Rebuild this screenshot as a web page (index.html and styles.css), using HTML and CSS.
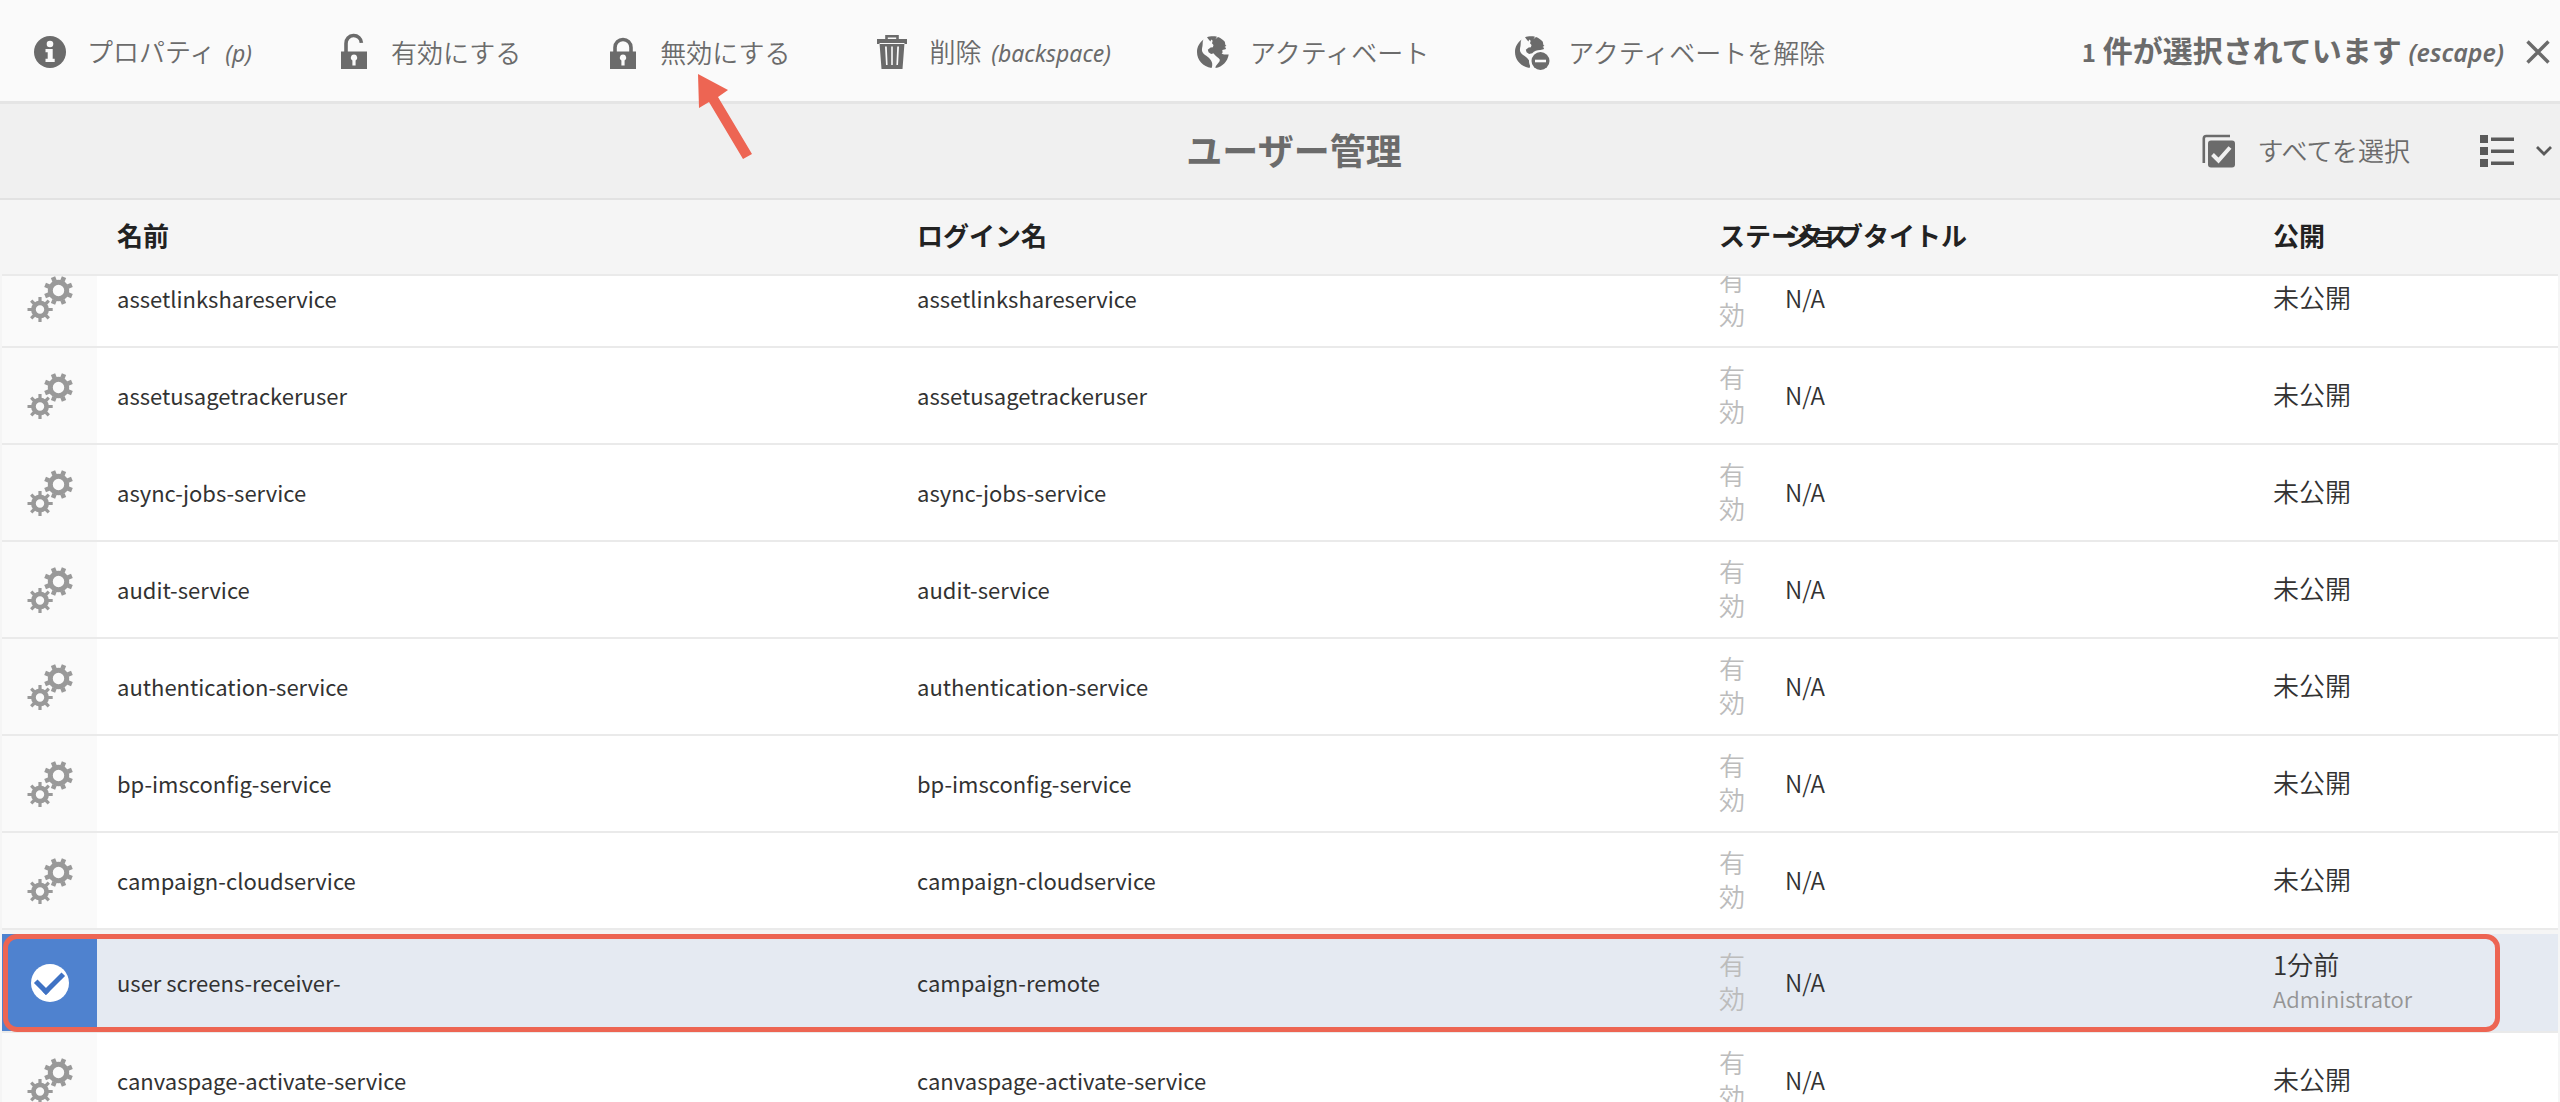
FILE: index.html
```html
<!DOCTYPE html>
<html lang="ja">
<head>
<meta charset="utf-8">
<title>ユーザー管理</title>
<link rel="stylesheet" href="styles.css">
</head>
<body>
<svg class="sprite" aria-hidden="true">
  <symbol id="gears" viewBox="0 0 46 46">
    <g fill="none" stroke="currentColor">
      <circle cx="31.5" cy="14.5" r="8.2" stroke-width="5"/>
      <path stroke-width="4.6" d="M40.8 18.4l4.1 1.7M35.4 23.8l1.6 4M27.6 23.8l-1.6 4M22.2 18.4l-4.1 1.7M22.2 10.6l-4.1-1.7M27.6 5.2l-1.6-4M35.4 5.2l1.6-4M40.8 10.6l4.1-1.7"/>
      <circle cx="13" cy="33.5" r="6.6" stroke-width="4.8"/>
      <path stroke-width="3.2" d="M21 33.500h4.700M5 33.500H.5M13 25.500V21M13 41.500V46M18.500 28l3.300-3.300M7.500 28l-3.300-3.300M18.500 39l3.300 3.300M7.500 39l-3.300 3.300"/>
    </g>
  </symbol>
  <symbol id="globe" viewBox="0 0 32 32">
    <path fill="currentColor" d="M6.500 3.600C2.600 6.500 0 11 0 16c0 8 6 14.800 14.500 15.900.9-1.600 1-4 .3-6-.9-2.200-2.200-3.600-3.900-5C8.800 19.200 6.400 18.300 5.400 16c-.9-2.200-.3-4.100.1-6.100.4-2-.2-4.200 1-6.300z"/>
    <path fill="currentColor" d="M10 1.300C12.500.1 17 0 20 .7l-1.600 2.600 2.600-2.200c2.500.9 5 2.600 6.800 4.700l.6 3.200 1 .7-1.800 1.300 1.500.9-.6 1.400-3.200.6.300 2.600-2 2.100-1.700-.6-2 .3.300-1.600-3.300.5-2.800.7-2.500-1.600-.8-2.500 2.800-2.300 2.300-.2.600-2.200-1.500-1.800.7-2.500-1.500-1.300-.8 1.900-1.700-1.800z"/>
    <path fill="currentColor" d="M16 15.500c3-.5 6.600.1 9.100 2.200 1.800 1 4.600 1 6.600.8C30.600 25.500 25.500 30.900 18.500 32c-.2-1.900 1.100-3 2.200-4.300 1.400-1.700 2.600-3 1.900-4.500-1.200-1.700-6.200-4.200-6.600-7.700z"/>
  </symbol>
</svg>

<header class="toolbar">
  <div class="actions">
    <button class="action" type="button">
      <svg class="icon" viewBox="0 0 32 32"><circle cx="16" cy="16" r="16" fill="currentColor"/><circle cx="16" cy="8" r="3.300" fill="#fafafa"/><path fill="#fafafa" d="M11.500 13h7.200v9.700h2v3.300h-9.200v-3.300h2.200v-6.400h-2.200z"/></svg>
      <span>プロパティ <em>(p)</em></span>
    </button>
    <button class="action" type="button">
      <svg class="icon icon-lock" viewBox="0 0 32 36"><path fill="none" stroke="currentColor" stroke-width="3.600" d="M8 20V9.500a7.700 7.700 0 0 1 15.400-.7"/><path fill="currentColor" fill-rule="evenodd" d="M3 17.500h26V35H3zM16 20.500a3.200 3.200 0 0 0-1.600 6v5h3.200v-5a3.200 3.200 0 0 0-1.600-6z"/></svg>
      <span>有効にする</span>
    </button>
    <button class="action" type="button">
      <svg class="icon icon-lock" viewBox="0 0 32 36"><path fill="none" stroke="currentColor" stroke-width="3.600" d="M8 20v-6.500a8 8 0 0 1 16 0V20"/><path fill="currentColor" fill-rule="evenodd" d="M3 17.500h26V35H3zM16 20.500a3.200 3.200 0 0 0-1.600 6v5h3.200v-5a3.200 3.200 0 0 0-1.600-6z"/></svg>
      <span>無効にする</span>
    </button>
    <button class="action" type="button">
      <svg class="icon icon-lock" viewBox="0 0 32 36"><path fill="none" stroke="currentColor" stroke-width="2.600" d="M10.500 6V2.300h11V6"/><path fill="currentColor" fill-rule="evenodd" d="M1 5h30v5H1zM3.500 9h25l-2 26h-21zM9 12.500l1 18.500h1.600l-.8-18.500zM15.200 12.500V31h1.600V12.500zM21.200 12.500L20.400 31h1.600l1-18.500z"/></svg>
      <span>削除 <em>(backspace)</em></span>
    </button>
    <button class="action" type="button">
      <svg class="icon" viewBox="0 0 32 32"><use href="#globe"/></svg>
      <span>アクティベート</span>
    </button>
    <button class="action" type="button">
      <svg class="icon" viewBox="0 0 32 32"><use href="#globe"/><circle cx="25" cy="25" r="11" fill="#fafafa"/><circle cx="25.500" cy="25" r="9" fill="currentColor"/><path stroke="#fafafa" stroke-width="2.600" d="M20 25h11"/></svg>
      <span>アクティベートを解除</span>
    </button>
  </div>
  <button class="selection" type="button">
    <span><span class="count">1</span> 件が選択されています <em>(escape)</em></span>
    <svg class="close" viewBox="0 0 24 24"><path fill="none" stroke="currentColor" stroke-width="3.400" d="M1.500 1.500l21 21M22.500 1.500l-21 21"/></svg>
  </button>
</header>

<div class="titlebar">
  <h1>ユーザー管理</h1>
  <div class="view">
    <button class="action" type="button">
      <svg class="icon-select" viewBox="0 0 34 34"><path fill="none" stroke="currentColor" stroke-width="2.600" d="M2.800 29V4.500a2.500 2.500 0 0 1 2.500-2.500H29"/><rect x="7" y="6.500" width="27" height="27" rx="3" fill="currentColor"/><path fill="none" stroke="#f0f0f0" stroke-width="4" d="M11.500 20.500l6 6L29 13.500"/></svg>
      <span>すべてを選択</span>
    </button>
    <button class="switcher" type="button" aria-label="リスト表示">
      <svg class="icon-list" viewBox="0 0 34 34"><path fill="currentColor" d="M0 1h8v8H0zM0 13h8v8H0zM0 25h8v8H0zM11 3.500h23v3.400H11zM11 15.500h23v3.400H11zM11 27.500h23v3.400H11z"/></svg>
      <svg class="chevron" viewBox="0 0 16 10"><path fill="none" stroke="currentColor" stroke-width="2.800" d="M1 1l7 7 7-7"/></svg>
    </button>
  </div>
</div>

<main>
<table class="users">
  <thead>
    <tr><th></th><th>名前</th><th>ログイン名</th><th>ステータス</th><th>ジョブタイトル</th><th>公開</th></tr>
  </thead>
  <tbody>
    <tr><td class="thumb"><svg><use href="#gears"/></svg></td><td>assetlinkshareservice</td><td>assetlinkshareservice</td><td class="status">有効</td><td class="job">N/A</td><td class="published">未公開</td></tr>
    <tr><td class="thumb"><svg><use href="#gears"/></svg></td><td>assetusagetrackeruser</td><td>assetusagetrackeruser</td><td class="status">有効</td><td class="job">N/A</td><td class="published">未公開</td></tr>
    <tr><td class="thumb"><svg><use href="#gears"/></svg></td><td>async-jobs-service</td><td>async-jobs-service</td><td class="status">有効</td><td class="job">N/A</td><td class="published">未公開</td></tr>
    <tr><td class="thumb"><svg><use href="#gears"/></svg></td><td>audit-service</td><td>audit-service</td><td class="status">有効</td><td class="job">N/A</td><td class="published">未公開</td></tr>
    <tr><td class="thumb"><svg><use href="#gears"/></svg></td><td>authentication-service</td><td>authentication-service</td><td class="status">有効</td><td class="job">N/A</td><td class="published">未公開</td></tr>
    <tr><td class="thumb"><svg><use href="#gears"/></svg></td><td>bp-imsconfig-service</td><td>bp-imsconfig-service</td><td class="status">有効</td><td class="job">N/A</td><td class="published">未公開</td></tr>
    <tr><td class="thumb"><svg><use href="#gears"/></svg></td><td>campaign-cloudservice</td><td>campaign-cloudservice</td><td class="status">有効</td><td class="job">N/A</td><td class="published">未公開</td></tr>
    <tr class="selected"><td class="thumb"><input type="checkbox" checked aria-label="user screens-receiver-"></td><td>user screens-receiver-</td><td>campaign-remote</td><td class="status">有効</td><td class="job">N/A</td><td class="published">1分前<small>Administrator</small></td></tr>
    <tr><td class="thumb"><svg><use href="#gears"/></svg></td><td>canvaspage-activate-service</td><td>canvaspage-activate-service</td><td class="status">有効</td><td class="job">N/A</td><td class="published">未公開</td></tr>
  </tbody>
</table>
</main>

<svg class="arrow" viewBox="0 0 54 86" aria-hidden="true"><path fill="#ed6553" d="M0 0l30 16-10 7 34 57-9 5L11 28 1 34z"/></svg>
</body>
</html>
```
FILE: styles.css
```css
* { box-sizing: border-box; }

body {
  margin: 0;
  height: 100vh;
  overflow: hidden;
  position: relative;
  background: #f5f5f5;
  color: #323232;
  font: 22px/34px "Noto Sans CJK JP", sans-serif;
}

.sprite { display: none; }

button {
  border: 0;
  padding: 0;
  background: none;
  color: #6b6b6b;
  font: inherit;
  display: flex;
  align-items: center;
  white-space: nowrap;
}

em { font-family: "Noto Sans", sans-serif; }

.toolbar {
  display: flex;
  justify-content: space-between;
  align-items: center;
  height: 104px;
  padding: 2px 10px 0 34px;
  background: #fafafa;
  border-bottom: 3px solid #e5e5e5;
}

.actions { display: flex; gap: 86px; }

.action {
  gap: 21px;
  font-size: 26px;
  font-weight: 350;
}
.action em { margin-left: 4px; font-size: 23px; font-weight: 400; }

.icon { width: 32px; height: 32px; overflow: visible; }
.icon-lock { height: 36px; }

.selection {
  gap: 22px;
  font-size: 30px;
  font-weight: 600;
}
.selection span { padding-bottom: 2px; }
.selection em { font-size: 25px; }
.count { font-size: 24px; }
.close { width: 24px; height: 24px; }

.titlebar {
  display: grid;
  grid-template-columns: 1fr auto 1fr;
  align-items: center;
  height: 96px;
  padding: 0 8px 0 36px;
  background: #f0f0f0;
  border-bottom: 2px solid #e2e2e2;
}

h1 {
  grid-column: 2;
  margin: 0;
  padding-bottom: 4px;
  color: #6b6b6b;
  font-size: 36px;
  font-weight: 600;
}

.view {
  display: flex;
  justify-content: flex-end;
  gap: 70px;
}
.view .action { gap: 22px; }
.view span { padding-bottom: 2px; }
.icon-select, .icon-list { width: 34px; height: 34px; }
.switcher { gap: 22px; color: #5a5a5a; }
.chevron { width: 16px; height: 10px; }

main { padding: 0 2px; }

.users, .users thead, .users tbody { display: block; }

.users tr {
  display: grid;
  grid-template-columns: 95px 800fr 802fr 66px 488fr 305fr;
}

.users th {
  padding: 0 0 4px 20px;
  text-align: left;
  color: #222;
  font-size: 26px;
  font-weight: 600;
  line-height: 70px;
  white-space: nowrap;
}

.users thead {
  position: relative;
  z-index: 1;
  background: #f5f5f5;
  border-bottom: 2px solid #eaeaea;
}

/* The list is scrolled part of a row under its header */
.users tbody { margin-top: -25px; }

.users tbody tr {
  height: 97px;
  background: #fff;
  border-bottom: 2px solid #eaeaea;
}

.users td {
  display: flex;
  flex-direction: column;
  justify-content: center;
  padding: 0 0 2px 20px;
}

.users .thumb {
  align-items: center;
  padding: 0;
  background: #fafafa;
}
.thumb svg { width: 46px; height: 46px; color: #999; }

.users .status {
  padding: 0 20px 4px;
  color: #bcbcbc;
  font-size: 26px;
  font-weight: 350;
}

.users .job { font-size: 24px; font-weight: 350; }

.users .published { padding-bottom: 4px; font-size: 26px; font-weight: 350; }
.published small { color: #959595; font-size: 22px; }

.users tbody .selected {
  position: relative;
  height: 99px;
  margin-top: 4px;
  background: #e5eaf2;
}

.selected .thumb { background: #4f82cf; }

.selected input {
  appearance: none;
  display: grid;
  place-items: center;
  width: 38px;
  height: 38px;
  margin: 0;
  border-radius: 50%;
  background: #fff;
}
.selected input::before {
  content: "";
  width: 12px;
  height: 22px;
  margin-bottom: 6px;
  border: solid #3f72c4;
  border-width: 0 5px 5px 0;
  transform: rotate(45deg);
}

/* Call-outs drawn over the list and toolbar */
.selected::after {
  content: "";
  position: absolute;
  inset: 0 58px -1px 1px;
  border: 5px solid #ed6553;
  border-radius: 14px;
}

.arrow {
  position: absolute;
  left: 698px;
  top: 74px;
  width: 54px;
  height: 86px;
}
```
